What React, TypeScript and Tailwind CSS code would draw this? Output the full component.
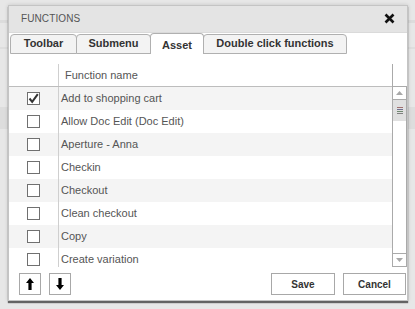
import React from "react";

const rows = [
  { name: "Add to shopping cart", checked: true },
  { name: "Allow Doc Edit (Doc Edit)", checked: false },
  { name: "Aperture - Anna", checked: false },
  { name: "Checkin", checked: false },
  { name: "Checkout", checked: false },
  { name: "Clean checkout", checked: false },
  { name: "Copy", checked: false },
  { name: "Create variation", checked: false },
];

const tabs = [
  { label: "Toolbar", w: "w-[67px]", active: false },
  { label: "Submenu", w: "w-[75px]", active: false },
  { label: "Asset", w: "w-[54px]", active: true },
  { label: "Double click functions", w: "w-[144px]", active: false },
];

function Checkbox({ checked }: { checked: boolean }) {
  return (
    <div className="w-[13px] h-[13px] border border-[#707070] bg-white flex items-center justify-center">
      {checked && (
        <svg width="11" height="11" viewBox="0 0 11 11">
          <path d="M1.5 5.5 L4.2 8.8 L9.8 1.2" fill="none" stroke="#333" strokeWidth="2" />
        </svg>
      )}
    </div>
  );
}

export default function App() {
  return (
    <div
      className="w-[415px] h-[309px] bg-[#e7e7e7] overflow-hidden relative"
      style={{ fontFamily: '"Liberation Sans", Arial, sans-serif' }}
    >
      <div className="absolute left-0 top-[20px] w-full h-[3px] bg-[#dcdcdc]" />
      <div className="absolute left-0 top-[47px] w-full h-[2px] bg-[#dedede]" />
      <div className="absolute left-0 top-[107px] w-full h-[22px] bg-[#dddddd]" />
      <div className="pt-[5px] pl-[8px] relative z-10">
        <div className="w-[400px] h-[296px] border border-[#c4c4c4] bg-white flex flex-col shadow-[0_2px_1px_rgba(0,0,0,0.55),0_0_4px_rgba(0,0,0,0.15)]">
          {/* header */}
          <div className="h-[27px] bg-[#e4e4e4] flex items-center justify-between pl-[12px] pr-[12px] pb-[2px] border-b border-[#dadada]">
            <span className="text-[10px] text-[#555] tracking-[0.1px]">FUNCTIONS</span>
            <svg width="11" height="11" viewBox="0 0 11 11">
              <path d="M1.5 1.5 L9.5 9.5 M9.5 1.5 L1.5 9.5" stroke="#111" strokeWidth="2.6" />
            </svg>
          </div>
          {/* tabs */}
          <div className="flex pl-[1px] pt-[1px] h-[21px] items-end">
            {tabs.map((t) =>
              t.active ? (
                <div
                  key={t.label}
                  className={`${t.w} h-[21px] -ml-px border border-b-0 border-[#b0b0b0] rounded-t-[4px] bg-white flex items-center justify-center pt-[3px] text-[11px] font-bold text-[#333] relative z-10`}
                >
                  {t.label}
                </div>
              ) : (
                <div
                  key={t.label}
                  className={`${t.w} h-[20px] -ml-px first:ml-0 border border-[#b0b0b0] rounded-t-[4px] bg-[#f3f3f3] flex items-center justify-center pb-[1px] text-[11px] font-bold text-[#333]`}
                >
                  {t.label}
                </div>
              )
            )}
          </div>
          {/* table */}
          <div className="flex mt-[10px] h-[203px]">
            <div className="w-[383px] flex flex-col">
              <div className="h-[23px] flex border-b border-[#bdbdbd]">
                <div className="w-[50px] border-r border-[#cfcfcf]" />
                <div className="flex-1 flex items-center pl-[6px] text-[11px] text-[#555]">Function name</div>
              </div>
              <div className="flex-1 overflow-hidden">
                {rows.map((r, i) => (
                  <div key={r.name} className={`h-[23px] flex ${i % 2 === 0 ? "bg-[#f4f4f4]" : "bg-white"}`}>
                    <div className="w-[50px] border-r border-[#cfcfcf] flex items-center justify-center">
                      <Checkbox checked={r.checked} />
                    </div>
                    <div className="flex-1 flex items-center pl-[2px] text-[11px] text-[#555]">{r.name}</div>
                  </div>
                ))}
              </div>
            </div>
            {/* scrollbar */}
            <div className="w-[15px] flex flex-col border-l border-[#aaaaaa]">
              <div className="h-[22px]" />
              <div className="flex-1 flex flex-col border border-l-0 border-[#aaaaaa]">
                <div className="h-[13px] border-b border-[#aaaaaa] flex items-center justify-center">
                  <svg width="7" height="4" viewBox="0 0 7 4">
                    <path d="M0 4 L3.5 0 L7 4 Z" fill="#a8a8a8" />
                  </svg>
                </div>
                <div className="h-[21px] bg-[#e0e0e0] flex flex-col items-center justify-center gap-[1px]">
                  <div className="w-[6px] h-[1px] bg-[#a07070]" />
                  <div className="w-[6px] h-[1px] bg-[#707090]" />
                  <div className="w-[6px] h-[1px] bg-[#708870]" />
                  <div className="w-[6px] h-[1px] bg-[#808080]" />
                </div>
                <div className="flex-1" />
                <div className="h-[13px] border-t border-[#aaaaaa] flex items-center justify-center">
                  <svg width="7" height="4" viewBox="0 0 7 4">
                    <path d="M0 0 L3.5 4 L7 0 Z" fill="#a8a8a8" />
                  </svg>
                </div>
              </div>
            </div>
          </div>
          {/* footer */}
          <div className="flex items-center mt-[6px] pl-[10px] pr-[1px]">
            <div className="w-[22px] h-[22px] border border-[#a8a8a8] bg-white flex items-center justify-center">
              <svg width="8" height="12" viewBox="0 0 8 12">
                <path d="M4 0 L8 5 L5.6 5 L5.6 12 L2.4 12 L2.4 5 L0 5 Z" fill="#000" />
              </svg>
            </div>
            <div className="w-[22px] h-[22px] ml-[8px] border border-[#a8a8a8] bg-white flex items-center justify-center">
              <svg width="8" height="12" viewBox="0 0 8 12">
                <path d="M4 12 L8 7 L5.6 7 L5.6 0 L2.4 0 L2.4 7 L0 7 Z" fill="#000" />
              </svg>
            </div>
            <div className="flex-1" />
            <div className="w-[64px] h-[22px] border border-[#a8a8a8] bg-white flex items-center justify-center text-[10px] font-bold text-[#333]">
              Save
            </div>
            <div className="w-[63px] h-[22px] ml-[8px] border border-[#a8a8a8] bg-white flex items-center justify-center text-[10px] font-bold text-[#333]">
              Cancel
            </div>
          </div>
        </div>
      </div>
    </div>
  );
}
